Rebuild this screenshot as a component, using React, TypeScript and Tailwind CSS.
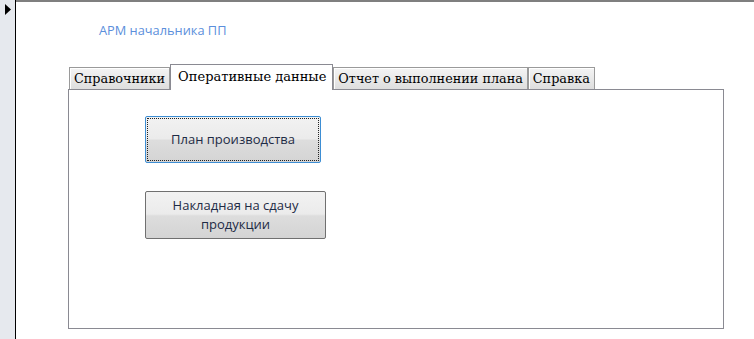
const tabs = [
  { label: 'Справочники', active: false },
  { label: 'Оперативные данные', active: true },
  { label: 'Отчет о выполнении плана', active: false },
  { label: 'Справка', active: false },
]

function FormButton({ children, focused, className }: { children: React.ReactNode; focused?: boolean; className: string }) {
  return (
    <button
      className={`relative flex items-center justify-center rounded-[2px] bg-[linear-gradient(#f2f2f2_0%,#ebebeb_48%,#dddddd_52%,#d4d4d4_100%)] text-center text-[13px] leading-[19px] text-[#1e2b45] ${
        focused ? 'border border-[#3d8ed4]' : 'border border-[#707070]'
      } ${className}`}
      style={{ fontFamily: '"Open Sans", "Noto Sans", sans-serif' }}
    >
      {focused && <span className="absolute inset-[1px] border border-dotted border-[#222]" />}
      <span>{children}</span>
    </button>
  )
}

export default function App() {
  return (
    <div className="flex h-[339px] w-[754px] overflow-hidden bg-white">
      <div className="w-[16px] shrink-0 border-r border-black bg-[#e6e9ee] pl-[5px] pt-[4px]">
        <svg width="6" height="11" viewBox="0 0 6 11">
          <path d="M0 0 L6 5.5 L0 11 Z" fill="#000" />
        </svg>
      </div>
      <div className="flex-1 border-t-2 border-[#7f7f7f] pl-[52px]">
        <div
          className="ml-[31px] mt-[20px] text-[12.8px] leading-[16px] text-[#5b8fdc]"
          style={{ fontFamily: '"Open Sans", "Noto Sans", sans-serif' }}
        >
          АРМ начальника ПП
        </div>
        <div className="ml-[1px] mt-[26px] flex items-end" style={{ fontFamily: '"DejaVu Serif", serif' }}>
          {tabs.map((t) =>
            t.active ? (
              <div
                key={t.label}
                className="relative z-10 -mb-px h-[26px] border border-b-0 border-[#8a8a92] bg-white pl-[7px] pr-[6px] pt-[2px] text-[13px] leading-[20px] text-black"
              >
                {t.label}
              </div>
            ) : (
              <div
                key={t.label}
                className="h-[22px] border border-b-0 border-[#9a9a9a] bg-[linear-gradient(#f4f4f4,#dedede)] px-[4px] text-[12.8px] leading-[21px] text-black shadow-[inset_1px_1px_0_#fff]"
              >
                {t.label}
              </div>
            )
          )}
        </div>
        <div className="h-[240px] w-[656px] border border-[#8a8a92] bg-white pl-[76px] pt-[26px]">
          <FormButton focused className="h-[47px] w-[176px]">
            План производства
          </FormButton>
          <FormButton className="mt-[28px] h-[48px] w-[181px] px-[14px]">
            Накладная на сдачу продукции
          </FormButton>
        </div>
      </div>
    </div>
  )
}
